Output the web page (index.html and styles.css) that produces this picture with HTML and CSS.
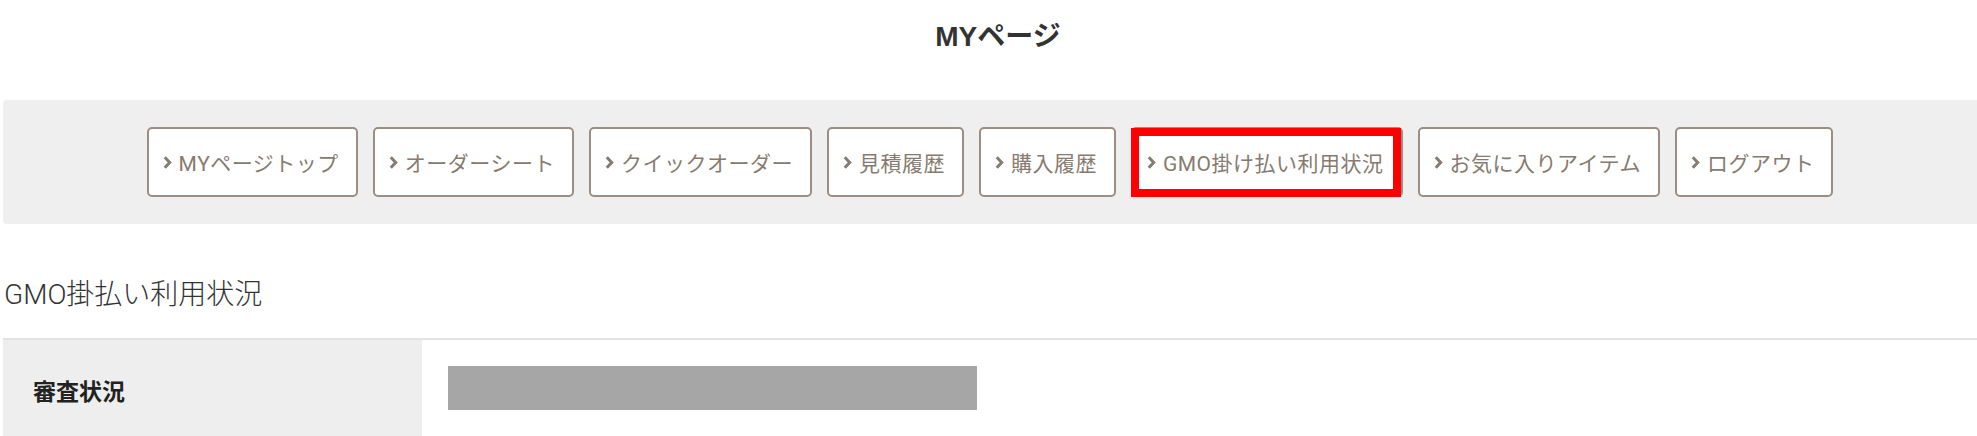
FILE: index.html
```html
<!DOCTYPE html>
<html lang="ja">
<head>
    <meta charset="UTF-8">
    <meta name="viewport" content="width=device-width, initial-scale=1.0">
    <title>MYページ</title>
    <link rel="stylesheet" href="styles.css">
</head>
<body>
    <div class="page">
        <h1 class="page-title">MYページ</h1>

        <!-- mypage menu -->
        <nav class="menu">
            <a class="menu-btn" href="#"><svg class="chev" viewBox="0 0 8 12"><path d="M1.5 1.2 L6 6 L1.5 10.8"/></svg>MYページトップ</a>
            <a class="menu-btn" href="#"><svg class="chev" viewBox="0 0 8 12"><path d="M1.5 1.2 L6 6 L1.5 10.8"/></svg>オーダーシート</a>
            <a class="menu-btn" href="#"><svg class="chev" viewBox="0 0 8 12"><path d="M1.5 1.2 L6 6 L1.5 10.8"/></svg>クイックオーダー</a>
            <a class="menu-btn" href="#"><svg class="chev" viewBox="0 0 8 12"><path d="M1.5 1.2 L6 6 L1.5 10.8"/></svg>見積履歴</a>
            <a class="menu-btn" href="#"><svg class="chev" viewBox="0 0 8 12"><path d="M1.5 1.2 L6 6 L1.5 10.8"/></svg>購入履歴</a>
            <a class="menu-btn marked" href="#"><svg class="chev" viewBox="0 0 8 12"><path d="M1.5 1.2 L6 6 L1.5 10.8"/></svg>GMO掛け払い利用状況</a>
            <a class="menu-btn" href="#"><svg class="chev" viewBox="0 0 8 12"><path d="M1.5 1.2 L6 6 L1.5 10.8"/></svg>お気に入りアイテム</a>
            <a class="menu-btn" href="#"><svg class="chev" viewBox="0 0 8 12"><path d="M1.5 1.2 L6 6 L1.5 10.8"/></svg>ログアウト</a>
        </nav>

        <h2 class="section-title">GMO掛払い利用状況</h2>

        <table class="status-table">
            <tr>
                <th>審査状況</th>
                <td><div class="masked"></div></td>
            </tr>
        </table>
    </div>
</body>
</html>
```

FILE: styles.css
```css
/* Basic Reset */
* {
    margin: 0;
    padding: 0;
    box-sizing: border-box;
}

body {
    font-family: Roboto, "Noto Sans CJK JP", sans-serif;
    color: #333;
    background-color: #fff;
    overflow: hidden;
}

.page {
    padding: 0 0 0 3px;
}

/* Title */
.page-title {
    font-family: "Liberation Sans", "Noto Sans CJK JP", sans-serif;
    font-size: 28px;
    font-weight: bold;
    color: #333;
    text-align: center;
    padding: 18px 0 0 16px;
    height: 100px;
    line-height: 38px;
}

/* Menu */
.menu {
    background-color: #efefef;
    border-radius: 4px 0 0 4px;
    height: 124px;
    display: flex;
    justify-content: center;
    align-items: center;
    gap: 15px;
}

.menu-btn {
    position: relative;
    display: flex;
    align-items: center;
    height: 70px;
    padding: 0 17px 0 14px;
    background-color: #fff;
    border: 2px solid #9b8f84;
    border-radius: 5px;
    color: #877b70;
    font-family: Roboto, "Noto Sans CJK JP", sans-serif;
    font-size: 21px;
    letter-spacing: 0.5px;
    text-decoration: none;
}

.chev {
    width: 9px;
    height: 13px;
    margin-right: 7px;
    fill: none;
    stroke: #877b70;
    stroke-width: 2.8;
}

/* red frame drawn over the current item */
.menu-btn.marked::after {
    content: "";
    position: absolute;
    top: -1px;
    left: -2px;
    right: 0;
    bottom: -2px;
    border: 8px solid #ff0000;
}

/* Section */
.section-title {
    font-size: 28px;
    font-weight: 300;
    color: #333;
    padding: 51px 0 0 1px;
    height: 114px;
    line-height: 40px;
}

.status-table {
    width: 100%;
    border-collapse: collapse;
    border-top: 2px solid #e3e3e3;
}

.status-table th {
    width: 419px;
    height: 100px;
    background-color: #eeeeee;
    text-align: left;
    font-family: "Noto Sans CJK JP", sans-serif;
    font-size: 23px;
    font-weight: bold;
    color: #222;
    padding: 0 0 0 30px;
    vertical-align: middle;
}

.status-table td {
    padding: 26px 0 0 26px;
    vertical-align: top;
}

.masked {
    width: 529px;
    height: 44px;
    background-color: #a6a6a6;
}
```
